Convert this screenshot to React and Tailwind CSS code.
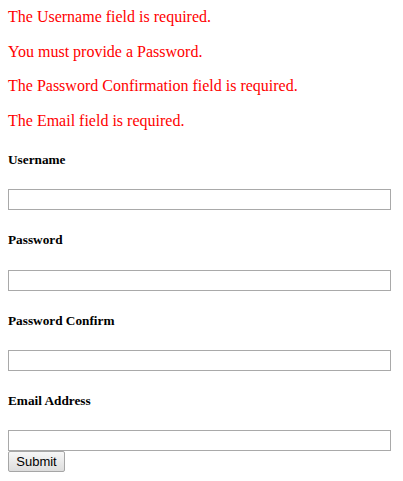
import React from 'react';

const errors = [
  'The Username field is required.',
  'You must provide a Password.',
  'The Password Confirmation field is required.',
  'The Email field is required.',
];

const fields = [
  { label: 'Username', type: 'text' },
  { label: 'Password', type: 'password' },
  { label: 'Password Confirm', type: 'password' },
  { label: 'Email Address', type: 'text' },
];

export default function App() {
  return (
    <div className="bg-white min-h-[481px] px-2 pt-2 font-['Liberation_Serif',serif] text-black">
      {/* Validation errors */}
      {errors.map((err) => (
        <p key={err} className="text-[16px] leading-[18.5px] text-[#ff0000] mb-4">
          {err}
        </p>
      ))}

      <form onSubmit={(e) => e.preventDefault()}>
        {fields.map((f) => (
          <div key={f.label}>
            <h5 className="text-[13.28px] leading-[15.3px] font-bold my-[22px]">{f.label}</h5>
            <input
              type={f.type}
              className="block w-[383px] h-[21px] bg-white border border-[#a9a9a9] outline-none px-[2px] text-[13px]"
            />
          </div>
        ))}
        <button
          type="submit"
          className="block w-[57px] h-[21px] border border-[#a6a6a6] rounded-[2px] bg-gradient-to-b from-[#f7f7f7] to-[#dddddd] font-['Liberation_Sans',sans-serif] text-[13px] leading-[19px] text-black"
        >
          Submit
        </button>
      </form>
    </div>
  );
}
